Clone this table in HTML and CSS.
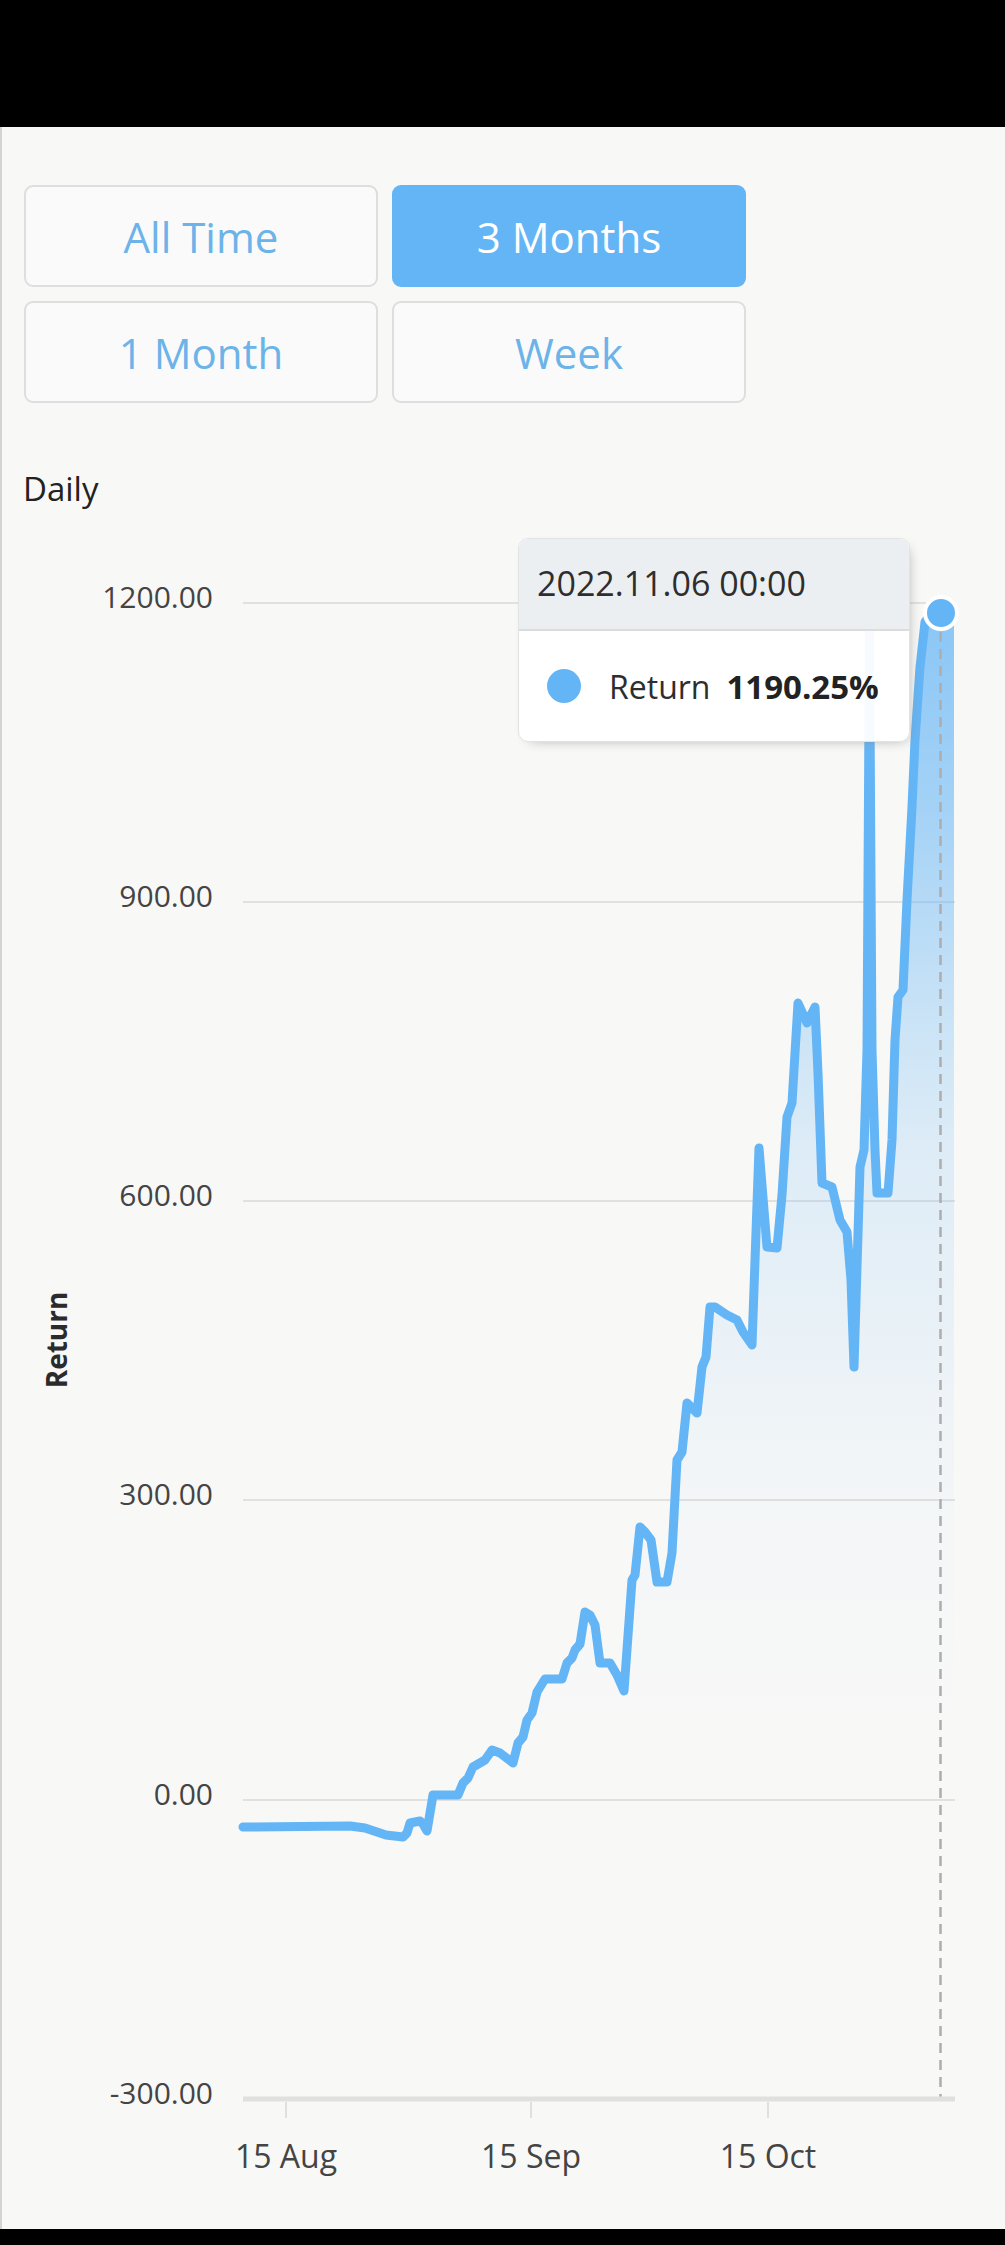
FILE: index.html
```html
<!DOCTYPE html>
<html lang="en">
<head>
<meta charset="utf-8">
<title>Daily Return</title>
<link rel="stylesheet" href="styles.css">
</head>
<body>
<div class="statusbar"></div>
<main class="page">
  <div class="ranges">
    <div class="range">All Time</div>
    <div class="range active">3 Months</div>
    <div class="range">1 Month</div>
    <div class="range">Week</div>
  </div>
  <h2 class="title">Daily</h2>
  <div class="chart">
    <svg class="chart-svg" width="1005" height="1709" viewBox="0 520 1005 1709" xmlns="http://www.w3.org/2000/svg">
      <defs>
        <linearGradient id="areaFill" gradientUnits="userSpaceOnUse" x1="0" y1="613" x2="0" y2="2099">
          <stop offset="0" stop-color="#64b5f6" stop-opacity="0.74"/>
          <stop offset="0.13" stop-color="#64b5f6" stop-opacity="0.57"/>
          <stop offset="0.28" stop-color="#64b5f6" stop-opacity="0.3"/>
          <stop offset="0.36" stop-color="#64b5f6" stop-opacity="0.18"/>
          <stop offset="0.53" stop-color="#64b5f6" stop-opacity="0.07"/>
          <stop offset="0.6" stop-color="#64b5f6" stop-opacity="0.03"/>
          <stop offset="0.75" stop-color="#64b5f6" stop-opacity="0"/>
        </linearGradient>
      </defs>
      <g class="grid">
        <line x1="243" y1="603" x2="955" y2="603"/>
        <line x1="243" y1="902" x2="955" y2="902"/>
        <line x1="243" y1="1201" x2="955" y2="1201"/>
        <line x1="243" y1="1500" x2="955" y2="1500"/>
        <line x1="243" y1="1800" x2="955" y2="1800"/>
      </g>
      <g class="ylabels">
        <text x="213" y="608">1200.00</text>
        <text x="213" y="907">900.00</text>
        <text x="213" y="1206">600.00</text>
        <text x="213" y="1505">300.00</text>
        <text x="213" y="1805">0.00</text>
        <text x="213" y="2104">-300.00</text>
      </g>
      <text class="ytitle" transform="translate(67,1340) rotate(-90)">Return</text>
      <path class="area" fill="url(#areaFill)" d="M243,1827 L350,1826 L365,1828 L386,1835 L403,1837 L407,1833 L410,1823 L420,1821 L423,1824 L427,1831 L433,1795 L458,1795 L463,1783 L468,1778 L473,1767 L485,1760 L492,1750 L500,1753 L513,1763 L518,1743 L523,1737 L527,1720 L532,1713 L537,1692 L545,1679 L562,1679 L567,1663 L572,1658 L575,1650 L580,1644 L585,1612 L590,1615 L595,1625 L600,1663 L610,1663 L617,1675 L624,1691 L632,1580 L635,1575 L640,1527 L645,1532 L651,1540 L657,1582 L667,1582 L672,1553 L677,1460 L682,1452 L687,1403 L697,1413 L702,1367 L706,1357 L710,1307 L715,1307 L727,1315 L737,1320 L743,1332 L752,1345 L759,1148 L767,1247 L777,1248 L782,1195 L787,1117 L792,1103 L798,1003 L807,1023 L815,1007 L818,1073 L822,1183 L832,1187 L840,1220 L847,1232 L851,1280 L854,1367 L857,1267 L860,1167 L864,1150 L867,1050 L869.5,625 L872,1050 L875,1150 L877,1193 L888,1193 L892,1140 L895,1040 L898,997 L903,990 L907,900 L912,807 L915,740 L920,667 L925,622 L933,610 L941,613 L954,613 L954,2099 L243,2099 Z"/>
      <line class="crosshair" x1="940.5" y1="632" x2="940.5" y2="2097"/>
      <path class="series" d="M243,1827 L350,1826 L365,1828 L386,1835 L403,1837 L407,1833 L410,1823 L420,1821 L423,1824 L427,1831 L433,1795 L458,1795 L463,1783 L468,1778 L473,1767 L485,1760 L492,1750 L500,1753 L513,1763 L518,1743 L523,1737 L527,1720 L532,1713 L537,1692 L545,1679 L562,1679 L567,1663 L572,1658 L575,1650 L580,1644 L585,1612 L590,1615 L595,1625 L600,1663 L610,1663 L617,1675 L624,1691 L632,1580 L635,1575 L640,1527 L645,1532 L651,1540 L657,1582 L667,1582 L672,1553 L677,1460 L682,1452 L687,1403 L697,1413 L702,1367 L706,1357 L710,1307 L715,1307 L727,1315 L737,1320 L743,1332 L752,1345 L759,1148 L767,1247 L777,1248 L782,1195 L787,1117 L792,1103 L798,1003 L807,1023 L815,1007 L818,1073 L822,1183 L832,1187 L840,1220 L847,1232 L851,1280 L854,1367 L857,1267 L860,1167 L864,1150 L867,1050 L869.5,625 L872,1050 L875,1150 L877,1193 L888,1193 L892,1140 L895,1040 L898,997 L903,990 L907,900 L912,807 L915,740 L920,667 L925,622 L933,610 L941,613 L954,613"/>
      <line class="xaxis" x1="243" y1="2099" x2="955" y2="2099"/>
      <g class="ticks">
        <line x1="286" y1="2102" x2="286" y2="2118"/>
        <line x1="531" y1="2102" x2="531" y2="2118"/>
        <line x1="768" y1="2102" x2="768" y2="2118"/>
      </g>
      <g class="xlabels">
        <text x="286" y="2168">15 Aug</text>
        <text x="531" y="2168">15 Sep</text>
        <text x="768" y="2168">15 Oct</text>
      </g>
      <circle class="marker" cx="941" cy="613" r="16"/>
    </svg>
    <div class="tooltip">
      <div class="tt-title">2022.11.06 00:00</div>
      <div class="tt-body">
        <span class="tt-dot"></span>
        <span class="tt-label">Return</span>
        <span class="tt-value">1190.25%</span>
      </div>
    </div>
  </div>
</main>
<div class="navbar"></div>
</body>
</html>
```
FILE: styles.css
```css
* { box-sizing: border-box; }

html, body {
  margin: 0;
  padding: 0;
  background: #000;
}

body {
  width: 1005px;
  font-family: "Open Sans", "Noto Sans", sans-serif;
}

.statusbar {
  height: 127px;
  background: #000;
}

.navbar {
  height: 16px;
  background: #000;
}

.page {
  height: 2102px;
  padding-top: 58px;
  background: #f8f8f7;
  box-shadow: inset 2px 0 0 #d4d4d4;
  overflow: hidden;
}

.ranges {
  display: grid;
  grid-template-columns: 354px 354px;
  grid-auto-rows: 102px;
  gap: 14px;
  margin-left: 24px;
}

.range {
  display: flex;
  align-items: center;
  justify-content: center;
  border: 2px solid #dedede;
  border-radius: 9px;
  background: #fafafa;
  color: #6cb3e9;
  font-size: 42px;
  font-weight: 400;
}

.range.active {
  background: #64b5f6;
  border-color: #64b5f6;
  color: #fff;
}

.title {
  margin: 63px 0 8px 23px;
  font-size: 33px;
  line-height: 46px;
  font-weight: 400;
  color: #222;
}

.chart {
  position: relative;
  height: 1709px;
}

.chart-svg {
  display: block;
}

.grid line {
  stroke: #e1e1e1;
  stroke-width: 2;
}

.ylabels text {
  font-family: "Open Sans", "Noto Sans", sans-serif;
  font-size: 30px;
  fill: #444;
  text-anchor: end;
}

.ytitle {
  font-family: "Open Sans", "Noto Sans", sans-serif;
  font-size: 28px;
  font-weight: 700;
  fill: #2b2b2b;
  text-anchor: middle;
}

.xlabels text {
  font-family: "Open Sans", "Noto Sans", sans-serif;
  font-size: 32px;
  fill: #444;
  text-anchor: middle;
}

.series {
  fill: none;
  stroke: #64b5f6;
  stroke-width: 9;
  stroke-linejoin: round;
  stroke-linecap: round;
}

.crosshair {
  stroke: #adadad;
  stroke-width: 2.5;
  stroke-dasharray: 10 7;
}

.xaxis {
  stroke: #e0e0e0;
  stroke-width: 5;
}

.ticks line {
  stroke: #e0e0e0;
  stroke-width: 2;
}

.marker {
  fill: #64b5f6;
  stroke: #fff;
  stroke-width: 4;
}

.tooltip {
  position: absolute;
  left: 518px;
  top: 18px;
  width: 392px;
  height: 204px;
  border: 1px solid #e3e3e3;
  border-radius: 10px;
  background: rgba(255, 255, 255, 0.95);
  box-shadow: 4px 4px 14px -8px #888;
  overflow: hidden;
  color: #333;
}

.tt-title {
  height: 92px;
  padding-left: 18px;
  background: #eceff1;
  border-bottom: 2px solid #dcdcdc;
  font-size: 34px;
  line-height: 88px;
  color: #2e2e2e;
}

.tt-body {
  display: flex;
  align-items: center;
  height: 110px;
  padding-left: 28px;
}

.tt-dot {
  width: 34px;
  height: 34px;
  border-radius: 50%;
  background: #64b5f6;
  margin-right: 28px;
}

.tt-label {
  font-size: 32px;
  color: #2e2e2e;
  margin-right: 16px;
}

.tt-value {
  font-size: 33px;
  font-weight: 700;
  color: #222;
}
```
